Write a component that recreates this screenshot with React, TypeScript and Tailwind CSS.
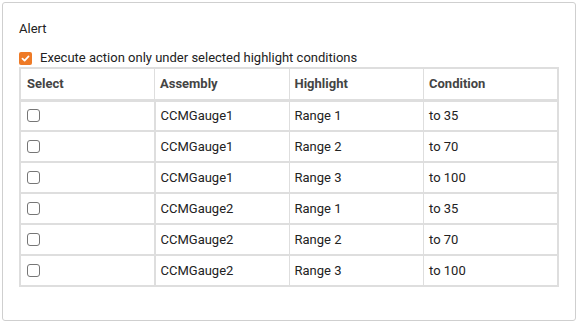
import React from "react";

const rows = [
  { assembly: "CCMGauge1", highlight: "Range 1", condition: "to 35" },
  { assembly: "CCMGauge1", highlight: "Range 2", condition: "to 70" },
  { assembly: "CCMGauge1", highlight: "Range 3", condition: "to 100" },
  { assembly: "CCMGauge2", highlight: "Range 1", condition: "to 35" },
  { assembly: "CCMGauge2", highlight: "Range 2", condition: "to 70" },
  { assembly: "CCMGauge2", highlight: "Range 3", condition: "to 100" },
];

function Box() {
  return (
    <span className="block w-[13px] h-[13px] rounded-[3px] border border-[#767676] bg-white" />
  );
}

export default function App() {
  return (
    <div
      className="w-[578px] h-[322px] p-[2px] bg-white text-[13px] text-[#222]"
      style={{ fontFamily: "Roboto, 'Liberation Sans', sans-serif" }}
    >
      <div className="w-[574px] h-[319px] border border-[#cfcfcf] rounded-[3px] px-[16px] pt-[17px]">
        <div className="leading-[18px]">Alert</div>
        <label className="mt-[12px] flex items-center gap-[8px] leading-[16px]">
          <span className="flex w-[13px] h-[13px] items-center justify-center rounded-[2px] bg-[#ee7a26]">
            <svg width="9" height="9" viewBox="0 0 10 10" fill="none">
              <path d="M1.6 5.2 L4 7.4 L8.4 2.6" stroke="white" strokeWidth="1.9" strokeLinecap="round" strokeLinejoin="round" />
            </svg>
          </span>
          <span>Execute action only under selected highlight conditions</span>
        </label>
        <table className="mt-[1px] w-[540px] table-fixed border-collapse border-2 border-[#dedede]">
          <thead>
            <tr className="h-[32px] border-b-[3px] border-[#dedede]">
              <th className="text-left font-bold text-[#444] pl-[6px] border border-[#dedede]">Select</th>
              <th className="text-left font-bold text-[#444] pl-[5px] border border-[#dedede]">Assembly</th>
              <th className="text-left font-bold text-[#444] pl-[5px] border border-[#dedede]">Highlight</th>
              <th className="text-left font-bold text-[#444] pl-[5px] border border-[#dedede]">Condition</th>
            </tr>
          </thead>
          <tbody>
            {rows.map((r, i) => (
              <tr key={i} className="h-[31px]">
                <td className="pl-[6px] border-2 border-[#dedede]">
                  <Box />
                </td>
                <td className="pl-[5px] border-x border-y-2 border-[#dedede]">{r.assembly}</td>
                <td className="pl-[5px] border-x border-y-2 border-[#dedede]">{r.highlight}</td>
                <td className="pl-[5px] border-x border-y-2 border-[#dedede]">{r.condition}</td>
              </tr>
            ))}
          </tbody>
        </table>
      </div>
    </div>
  );
}
